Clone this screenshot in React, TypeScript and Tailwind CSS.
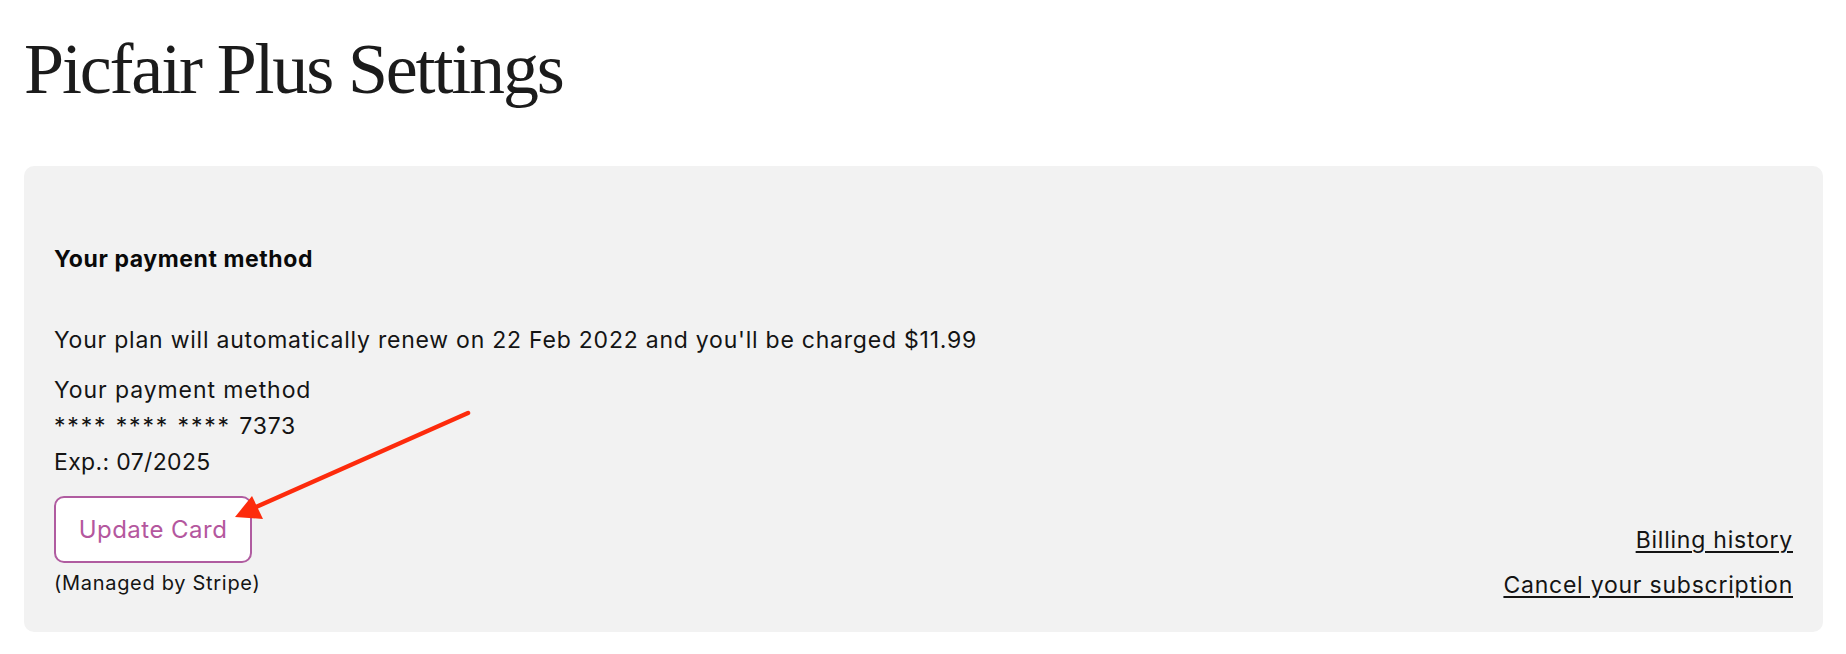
export default function App() {
  return (
    <div className="min-h-screen bg-white pl-[24px] pr-[23px] font-['Inter',sans-serif] tracking-[0.048em] text-[#141414]">
      <h1 className="pt-[33px] font-['Liberation_Serif',serif] text-[72px] font-normal leading-[72px] tracking-[-0.03em] text-[#1b1b1b]">
        Picfair Plus Settings
      </h1>

      <div className="relative mt-[61px] rounded-[10px] bg-[#f2f2f2] px-[30px] pt-[75px] pb-[33px]">
        <h2 className="text-[23px] font-bold leading-[36px] tracking-[0.025em] text-[#0a0a0a]">Your payment method</h2>

        <p className="mt-[45px] text-[23px] leading-[36px]">
          Your plan will automatically renew on 22 Feb 2022 and you'll be charged $11.99
        </p>

        <div className="mt-[14px] text-[23px] leading-[36px]">
          <p className="tracking-[0.04em]">Your payment method</p>
          <p>
            <span className="tracking-[0.08em]">**** **** **** </span>7373
          </p>
          <p className="tracking-[0.015em]">Exp.: 07/2025</p>
        </div>

        <div className="mt-[16px] flex items-end justify-between">
          <div className="flex flex-col items-start">
            <button className="h-[67px] w-[198px] rounded-[10px] border-2 border-[#b05ca0] bg-white text-[24px] tracking-[0.02em] text-[#b4579e]">
              Update Card
            </button>
            <span className="mt-[4px] text-[20px] leading-[32px] tracking-[0.035em]">(Managed by Stripe)</span>
          </div>
          <div className="flex flex-col items-end gap-[17px] text-[23px] leading-[28px]">
            <a href="#" className="underline decoration-[1.5px] underline-offset-[3px]">
              Billing history
            </a>
            <a href="#" className="underline decoration-[1.5px] underline-offset-[3px]">
              Cancel your subscription
            </a>
          </div>
        </div>

        {/* annotation arrow pointing at the button */}
        <svg
          className="pointer-events-none absolute left-[196px] top-[234px] h-[130px] w-[270px]"
          viewBox="0 0 270 130"
        >
          <line x1="248" y1="13" x2="36" y2="107" stroke="#fd2b0c" strokeWidth="4.5" strokeLinecap="round" />
          <polygon points="15,117 32,96 43,119" fill="#fd2b0c" />
        </svg>
      </div>
    </div>
  );
}
